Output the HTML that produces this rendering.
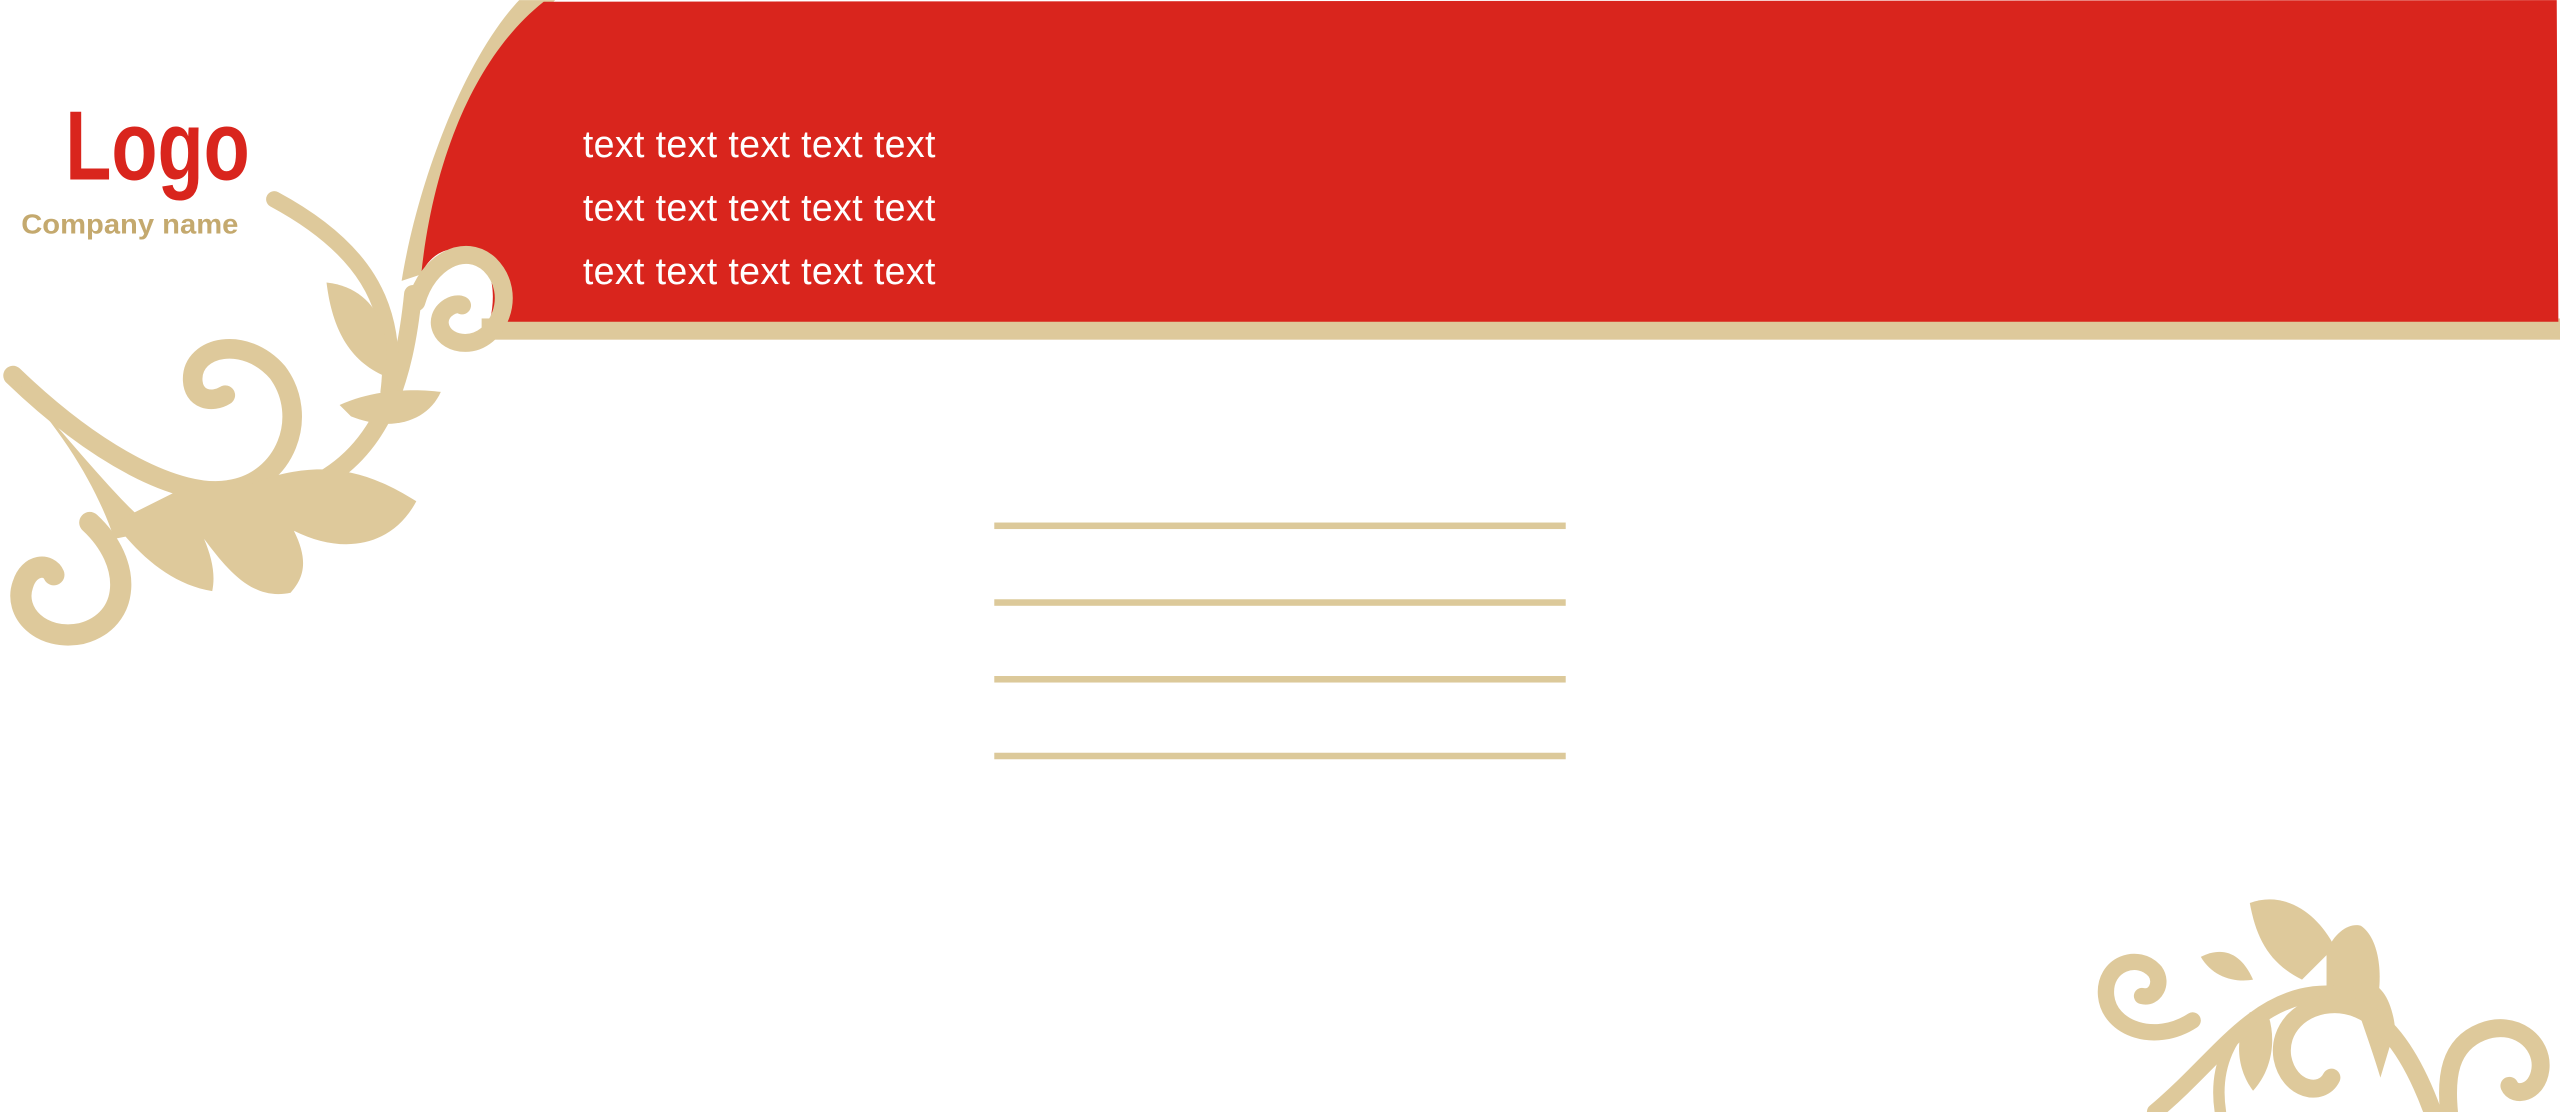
<!DOCTYPE html>
<html><head><meta charset="utf-8"><style>
html,body{margin:0;padding:0;background:#fff;overflow:hidden}
svg{display:block}
</style></head><body>
<svg width="2560" height="1112" viewBox="0 0 1568 681" xmlns="http://www.w3.org/2000/svg">
<rect width="1568" height="681" fill="#fff"/>
<g fill="#dec99b" stroke="none">
  <path d="M318,0 L340,0 C300,40 270,110 258,168 L246,172 C256,110 285,35 318,0 Z"/>
  <rect x="295" y="195" width="1273" height="13"/>
</g>
<path d="M333,1 L1566,0 L1567,197 L300,197 C305,175 300,158 285,153 C272,150 262,158 258,168 C265,100 290,35 333,1 Z" fill="#d9251d"/>
<g fill="none" stroke="#dec99b" stroke-linecap="round">
  <path d="M255,185 C262,160 285,148 300,162 C318,180 305,210 285,210 C270,210 264,195 275,188 C280,185 283,187 283,187" stroke-width="11"/>
  <path d="M253,180 C248,230 235,280 185,300" stroke-width="11"/>
  <path d="M168,122 C220,150 245,185 238,240" stroke-width="10"/>
  <path d="M8,230 C60,280 110,305 140,300 C175,295 190,255 170,228 C150,205 118,212 118,232 C118,245 130,247 138,242" stroke-width="12"/>
  <path d="M55,320 C82,345 80,380 50,388 C25,393 8,375 14,358 C18,345 30,345 33,352" stroke-width="13"/>
</g>
<g fill="#dec99b">
  <path d="M5,228 C40,265 60,300 70,330 L95,325 C70,305 40,265 5,228 Z"/>
  <path d="M200,173 C230,176 242,205 235,230 C212,220 203,198 200,173 Z"/>
  <path d="M208,248 C230,238 255,238 270,240 C262,258 240,265 215,255 Z"/>
  <path d="M145,300 C190,280 220,285 255,307 C240,335 210,340 180,325 C190,345 185,355 178,363 C155,368 140,350 125,330 C130,342 132,352 130,362 C105,358 85,340 70,320 L110,300 Z"/>
  <path d="M1378,553 C1400,545 1420,560 1430,580 L1410,600 C1390,590 1382,575 1378,553 Z"/>
  <path d="M1425,583 C1430,570 1440,565 1446,567 C1458,575 1460,600 1455,618 L1425,615 Z"/>
  <path d="M1348,586 C1360,580 1372,582 1380,600 C1368,602 1355,598 1348,586 Z"/>
  <path d="M1388,618 C1395,635 1392,655 1380,668 C1370,655 1368,635 1378,620 Z"/>
  <path d="M1440,605 C1455,595 1465,610 1467,630 L1458,660 C1452,640 1445,622 1440,605 Z"/>
</g>
<g fill="none" stroke="#dec99b" stroke-linecap="round">
  <path d="M1320,681 C1345,660 1360,640 1380,625 C1400,610 1420,606 1438,610" stroke-width="10"/>
  <path d="M1360,681 C1356,655 1365,630 1390,617" stroke-width="7"/>
  <path d="M1343,625 C1320,640 1292,630 1290,610 C1288,590 1310,583 1320,595 C1325,602 1320,612 1312,610" stroke-width="10"/>
  <path d="M1490,681 C1475,640 1455,615 1430,615 C1410,615 1395,630 1398,648 C1402,668 1422,672 1428,660" stroke-width="11"/>
  <path d="M1500,681 C1498,660 1500,640 1520,632 C1540,624 1558,638 1556,655 C1554,670 1540,672 1537,665" stroke-width="11"/>
</g>
<text x="40" y="110" font-family="Liberation Sans, sans-serif" font-weight="bold" font-size="60" fill="#d9251d" textLength="113" lengthAdjust="spacingAndGlyphs">Logo</text>
<text x="13" y="143" font-family="Liberation Sans, sans-serif" font-weight="bold" font-size="17" fill="#c4a96e" textLength="133" lengthAdjust="spacingAndGlyphs">Company name</text>
<g font-family="Liberation Sans, sans-serif" font-size="23" fill="#fff">
  <text x="357" y="96" textLength="216">text text text text text</text>
  <text x="357" y="135" textLength="216">text text text text text</text>
  <text x="357" y="174" textLength="216">text text text text text</text>
</g>
<g fill="#dcc99a">
  <rect x="609" y="320" width="350" height="4"/>
  <rect x="609" y="367" width="350" height="4"/>
  <rect x="609" y="414" width="350" height="4"/>
  <rect x="609" y="461" width="350" height="4"/>
</g>
</svg>
</body></html>
